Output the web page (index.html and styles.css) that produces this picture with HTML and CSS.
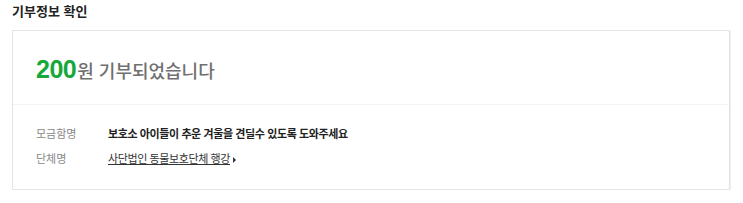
FILE: index.html
```html
<!DOCTYPE html>
<html lang="ko">
<head>
    <meta charset="utf-8">
    <title>기부정보 확인</title>
    <link rel="stylesheet" href="styles.css">
</head>
<body>
<div class="donate-info">
    <h2 class="section-title">기부정보 확인</h2>
    <div class="info-box">
        <div class="info-head">
            <p class="result"><strong class="amount">200</strong>원 기부되었습니다</p>
        </div>
        <dl class="info-list">
            <div class="info-row">
                <dt>모금함명</dt>
                <dd class="strong">보호소 아이들이 추운 겨울을 견딜수 있도록 도와주세요</dd>
            </div>
            <div class="info-row">
                <dt>단체명</dt>
                <dd><a href="#" class="org-link">사단법인 동물보호단체 행강</a><span class="arrow"></span></dd>
            </div>
        </dl>
    </div>
</div>
</body>
</html>
```

FILE: styles.css
```css
* {
    box-sizing: border-box;
    margin: 0;
    padding: 0;
}

body {
    background: #fff;
    font-family: "Noto Sans CJK KR", "Liberation Sans", sans-serif;
    color: #333;
}

.donate-info {
    width: 718px;
    margin-left: 12px;
}

.section-title {
    font-size: 13px;
    font-weight: 700;
    line-height: 20px;
    color: #222;
    padding-top: 1px;
    margin-bottom: 9px;
}

.info-box {
    border: 1px solid #e4e4e4;
    box-shadow: 1px 1px 0 #eee;
}

.info-head {
    height: 74px;
    display: flex;
    align-items: center;
    padding-left: 23px;
    border-bottom: 1px solid #f3f3f3;
}

.result {
    font-size: 18px;
    font-weight: 500;
    color: #707070;
    line-height: 30px;
    padding-top: 3px;
}

.amount {
    font-family: "Liberation Sans", Arial, sans-serif;
    font-size: 25px;
    font-weight: 700;
    color: #16a83a;
    letter-spacing: -0.5px;
    margin-right: 1px;
}

.info-list {
    padding: 15px 23px 19px;
}

.info-row {
    display: flex;
    align-items: center;
    height: 25px;
    font-size: 11px;
}

.info-row dt {
    width: 72px;
    color: #888;
}

.info-row dd {
    color: #333;
    letter-spacing: -0.4px;
}

.info-row .strong {
    font-weight: 700;
    color: #222;
}

.org-link {
    color: #333;
    text-decoration: underline;
}

.arrow {
    display: inline-block;
    margin-left: 3px;
    border-left: 3px solid #333;
    border-top: 3px solid transparent;
    border-bottom: 3px solid transparent;
    vertical-align: middle;
}
```
